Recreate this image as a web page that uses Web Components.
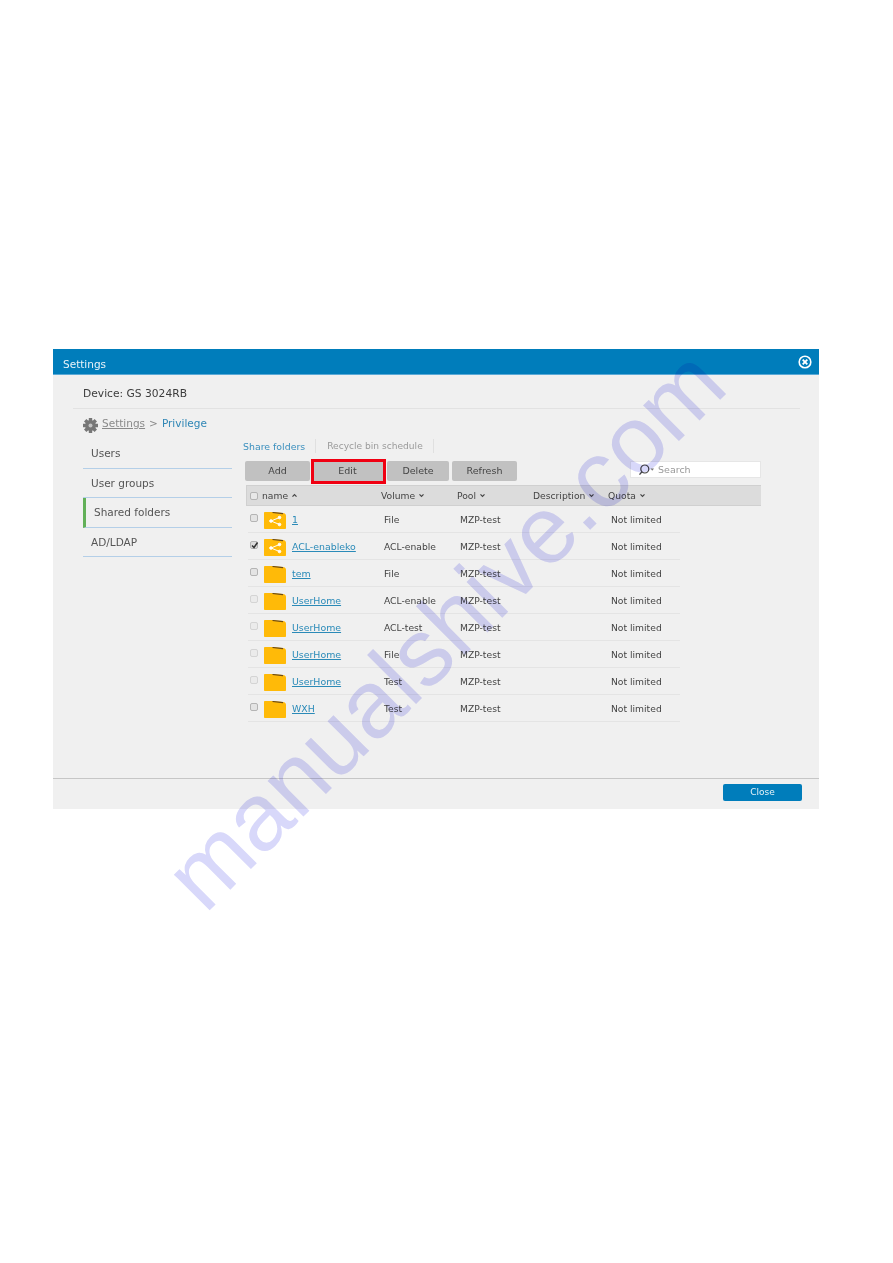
<!DOCTYPE html>
<html>
<head>
<meta charset="utf-8">
<title>Settings</title>
<style>
    html, body { margin: 0; background: #fff; }
    body {
        position: relative;
        height: 1263px;
        overflow: hidden;
        padding-top: 349px;
        box-sizing: border-box;
        font-family: "DejaVu Sans", Verdana, sans-serif;
    }
</style>
</head>
<body>
<settings-dialog heading="Settings">
    <device-title>Device: GS 3024RB</device-title>
    <bread-crumb></bread-crumb>
    <div style="display:flex;gap:11px;margin:2px 0 0 30px">
        <side-nav></side-nav>
        <div style="width:518px">
            <folder-tabs></folder-tabs>
            <folder-toolbar></folder-toolbar>
            <folder-table>
                <folder-row name="1" volume="File" shared></folder-row>
                <folder-row name="ACL-enableko" volume="ACL-enable" shared checked></folder-row>
                <folder-row name="tem" volume="File"></folder-row>
                <folder-row name="UserHome" volume="ACL-enable" dim></folder-row>
                <folder-row name="UserHome" volume="ACL-test" dim></folder-row>
                <folder-row name="UserHome" volume="File" dim></folder-row>
                <folder-row name="UserHome" volume="Test" dim></folder-row>
                <folder-row name="WXH" volume="Test"></folder-row>
            </folder-table>
        </div>
    </div>
</settings-dialog>
<water-mark>manualshive.com</water-mark>

<script>
const chevron = (up) => `<svg width="7" height="5" viewBox="0 0 7 5" style="margin-left:3px"><path d="${up ? 'M1.500 3.700 3.500 1.700 5.500 3.700' : 'M1.500 1.300 3.500 3.300 5.500 1.300'}" fill="none" stroke="#444" stroke-width="1.200"/></svg>`;

class SettingsDialog extends HTMLElement {
    connectedCallback() {
        this.attachShadow({ mode: 'open' });
        this.shadowRoot.innerHTML = `
            <style>
                :host {
                    display: flex;
                    flex-direction: column;
                    width: 766px;
                    height: 460px;
                    margin-left: 53px;
                    background: #f0f0f0;
                    color: #444;
                    filter: blur(0.3px);
                }
                .head {
                    display: flex;
                    align-items: center;
                    justify-content: space-between;
                    height: 25px;
                    padding: 0 7px 0 10px;
                    background: #007dbb;
                    border-bottom: 1px solid #5aa9d6;
                    color: #e8f3f9;
                    font-size: 10.5px;
                }
                .head span { margin-top: 4px; }
                .head svg { margin-top: 1px; }
                .body { flex: 1; }
                .foot {
                    display: flex;
                    justify-content: flex-end;
                    align-items: flex-start;
                    box-sizing: border-box;
                    height: 31px;
                    padding: 5px 17px 0 0;
                    border-top: 1px solid #c6c6c6;
                }
                .close {
                    width: 79px;
                    height: 17px;
                    line-height: 17px;
                    border-radius: 2px;
                    background: #007dbb;
                    color: #e6f2f8;
                    font-size: 9px;
                    text-align: center;
                }
            </style>
            <div class="head">
                <span>${this.getAttribute('heading')}</span>
                <svg width="14" height="14" viewBox="0 0 14 14">
                    <circle cx="7" cy="7" r="5.800" fill="none" stroke="#fff" stroke-width="1.600"/>
                    <path d="M4.700 4.700 9.300 9.300M9.300 4.700 4.700 9.300" stroke="#fff" stroke-width="1.900"/>
                </svg>
            </div>
            <div class="body"><slot></slot></div>
            <div class="foot"><div class="close">Close</div></div>
        `;
    }
}

class DeviceTitle extends HTMLElement {
    connectedCallback() {
        this.attachShadow({ mode: 'open' });
        this.shadowRoot.innerHTML = `
            <style>
                :host {
                    display: block;
                    height: 34px;
                    line-height: 38px;
                    box-sizing: border-box;
                    margin: 0 19px 0 20px;
                    padding-left: 10px;
                    border-bottom: 1px solid #e2e2e2;
                    color: #3c3c3c;
                    font-size: 10.7px;
                }
            </style>
            <slot></slot>
        `;
    }
}

class BreadCrumb extends HTMLElement {
    connectedCallback() {
        this.attachShadow({ mode: 'open' });
        this.shadowRoot.innerHTML = `
            <style>
                :host {
                    display: flex;
                    align-items: center;
                    height: 28px;
                    padding-left: 30px;
                    font-size: 10.5px;
                    color: #8a8a8a;
                }
                svg { margin: 4px 4px 0 0; }
                u { margin-right: 4px; }
                b { font-weight: 400; color: #2f86b5; margin-left: 4px; }
            </style>
            <svg width="15" height="15" viewBox="0 0 15 15">
                <g fill="#777">
                    <circle cx="7.500" cy="7.500" r="5.400"/>
                    <path d="M5.800 0h3.400v3H5.800zM5.800 12h3.400v3H5.800zM0 5.800h3v3.400H0zM12 5.800h3v3.400h-3z"/>
                    <path d="M5.800 0h3.400v3H5.800zM5.800 12h3.400v3H5.800zM0 5.800h3v3.400H0zM12 5.800h3v3.400h-3z" transform="rotate(45 7.500 7.500)"/>
                </g>
                <circle cx="7.500" cy="7.500" r="2" fill="#c4c4c4"/>
            </svg>
            <u>Settings</u><span>&gt;</span><b>Privilege</b>
        `;
    }
}

class SideNav extends HTMLElement {
    connectedCallback() {
        this.attachShadow({ mode: 'open' });
        const items = [['Users'], ['User groups'], ['Shared folders', true], ['AD/LDAP']];
        this.shadowRoot.innerHTML = `
            <style>
                :host {
                    display: block;
                    width: 149px;
                    font-size: 10.5px;
                    color: #555;
                }
                div {
                    box-sizing: border-box;
                    height: 29.5px;
                    line-height: 29px;
                    padding-left: 8px;
                    border-bottom: 1px solid #b4cfe8;
                }
                .on {
                    padding-left: 8px;
                    border-left: 3px solid #62b058;
                }
            </style>
            ${items.map(([label, on]) => `<div class="${on ? 'on' : ''}">${label}</div>`).join('')}
        `;
    }
}

class FolderTabs extends HTMLElement {
    connectedCallback() {
        this.attachShadow({ mode: 'open' });
        this.shadowRoot.innerHTML = `
            <style>
                :host {
                    display: flex;
                    align-items: center;
                    height: 14px;
                    font-size: 9.1px;
                    color: #9a9a9a;
                }
                span { color: #3a8fbe; font-size: 9.4px; }
                i { width: 1px; height: 14px; margin: 0 11px 0 10px; background: #e0e0e0; }
            </style>
            <span>Share folders</span><i></i>Recycle bin schedule<i></i>
        `;
    }
}

class FolderToolbar extends HTMLElement {
    connectedCallback() {
        this.attachShadow({ mode: 'open' });
        this.shadowRoot.innerHTML = `
            <style>
                :host {
                    display: flex;
                    align-items: flex-start;
                    margin: 8px 0 0 2px;
                    height: 24px;
                    font-size: 9.5px;
                    color: #444;
                }
                .btn {
                    height: 20px;
                    line-height: 20px;
                    border-radius: 2px;
                    background: #c1c1c1;
                    text-align: center;
                }
                .edit {
                    position: relative;
                    box-sizing: border-box;
                    padding-right: 2px;
                }
                .edit::after {
                    content: "";
                    position: absolute;
                    inset: -2px -1px -3px -1px;
                    border: 3px solid #f00012;
                }
                .search {
                    display: flex;
                    align-items: center;
                    gap: 3px;
                    box-sizing: border-box;
                    width: 131px;
                    height: 17px;
                    margin-left: auto;
                    padding-left: 7px;
                    background: #fff;
                    border: 1px solid #e6e6e6;
                    color: #999;
                }
            </style>
            <div class="btn" style="width:65px">Add</div>
            <div class="btn edit" style="width:73px;margin-left:2px">Edit</div>
            <div class="btn" style="width:62px;margin-left:2px">Delete</div>
            <div class="btn" style="width:65px;margin-left:3px">Refresh</div>
            <div class="search">
                <svg width="17" height="12" viewBox="0 0 17 12">
                    <circle cx="6.800" cy="5" r="4" fill="none" stroke="#444" stroke-width="1.200"/>
                    <path d="M3.800 8 1.500 10.700" stroke="#444" stroke-width="1.300"/>
                    <path d="M12.500 4.500h3.500l-1.750 2.200z" fill="#777"/>
                </svg>
                Search
            </div>
        `;
    }
}

class FolderTable extends HTMLElement {
    connectedCallback() {
        this.attachShadow({ mode: 'open' });
        this.shadowRoot.innerHTML = `
            <style>
                :host {
                    display: block;
                    margin-left: 3px;
                    font-size: 9.2px;
                    color: #444;
                }
                .head {
                    display: grid;
                    grid-template-columns: 12px 119px 76px 76px 75px 1fr;
                    align-items: center;
                    box-sizing: border-box;
                    height: 21px;
                    padding-left: 3px;
                    background: #dcdcdc;
                    border: 1px solid #d0d0d0;
                    border-width: 1px 0 1px 1px;
                }
                .head span { display: flex; align-items: center; }
                .box {
                    box-sizing: border-box;
                    width: 8px;
                    height: 8px;
                    border: 1px solid #b4b4b4;
                    border-radius: 2px;
                    background: #e8e8e8;
                }
                .rows { width: 434px; }
            </style>
            <div class="head">
                <div class="box"></div>
                <span>name${chevron(true)}</span>
                <span>Volume${chevron()}</span>
                <span>Pool${chevron()}</span>
                <span>Description${chevron()}</span>
                <span>Quota${chevron()}</span>
            </div>
            <div class="rows"><slot></slot></div>
        `;
    }
}

class FolderRow extends HTMLElement {
    connectedCallback() {
        this.attachShadow({ mode: 'open' });
        const shared = this.hasAttribute('shared');
        const checked = this.hasAttribute('checked');
        const dim = this.hasAttribute('dim');
        this.shadowRoot.innerHTML = `
            <style>
                :host {
                    display: grid;
                    grid-template-columns: 14px 28px 92px 76px 151px 1fr;
                    align-items: center;
                    box-sizing: border-box;
                    height: 27px;
                    margin-left: 2px;
                    padding-left: 2px;
                    border-bottom: 1px solid #e4e4e4;
                }
                .box {
                    box-sizing: border-box;
                    width: 8px;
                    height: 8px;
                    margin-top: -2px;
                    border: 1px solid ${dim ? '#d4d4d4' : '#b4b4b4'};
                    border-radius: 2px;
                    background: ${checked ? '#dcdcdc' : dim ? '#ebebeb' : '#e4e4e4'};
                    position: relative;
                }
                .box svg { position: absolute; left: 0; top: -1px; }
                a { color: #2a8ab8; text-decoration: underline; font-size: 9.4px; }
                svg.folder { display: block; margin-top: 2px; }
            </style>
            <div class="box">${checked ? '<svg width="8" height="8" viewBox="0 0 8 8"><path d="M1 4.500 3 6.500 6.500 1.500" fill="none" stroke="#333" stroke-width="1.500"/></svg>' : ''}</div>
            <svg class="folder" width="22" height="17" viewBox="0 0 22 17">
                <path d="M0 .8Q0 0 .8 0H8L19 1Q22 1.300 22 4V16.200Q22 17 21.200 17H.8Q0 17 0 16.200Z" fill="#ffba08"/>
                <path d="M8.500 .5 19 1.600" stroke="#6b4a16" stroke-width="1.200"/>
                ${shared ? `<g fill="#fff" stroke="#fff">
                    <path d="M7 9 15.500 5.500M7 9 15.500 12.500" stroke-width="1"/>
                    <circle cx="7" cy="9" r="1.300"/><circle cx="15.500" cy="5.500" r="1.300"/><circle cx="15.500" cy="12.500" r="1.300"/>
                </g>` : ''}
            </svg>
            <div><a>${this.getAttribute('name')}</a></div>
            <div>${this.getAttribute('volume')}</div>
            <div>MZP-test</div>
            <div>Not limited</div>
        `;
    }
}

class WaterMark extends HTMLElement {
    connectedCallback() {
        this.attachShadow({ mode: 'open' });
        this.shadowRoot.innerHTML = `
            <style>
                :host {
                    position: absolute;
                    left: 205px;
                    top: 835px;
                    font: 95.5px/1 "Liberation Sans", Arial, sans-serif;
                    color: #d8d8fa;
                    white-space: nowrap;
                    transform-origin: 0 80px;
                    transform: rotate(-45deg);
                    mix-blend-mode: multiply;
                    pointer-events: none;
                }
            </style>
            <slot></slot>
        `;
    }
}

customElements.define('settings-dialog', SettingsDialog);
customElements.define('device-title', DeviceTitle);
customElements.define('bread-crumb', BreadCrumb);
customElements.define('side-nav', SideNav);
customElements.define('folder-tabs', FolderTabs);
customElements.define('folder-toolbar', FolderToolbar);
customElements.define('folder-table', FolderTable);
customElements.define('folder-row', FolderRow);
customElements.define('water-mark', WaterMark);
</script>
</body>
</html>
